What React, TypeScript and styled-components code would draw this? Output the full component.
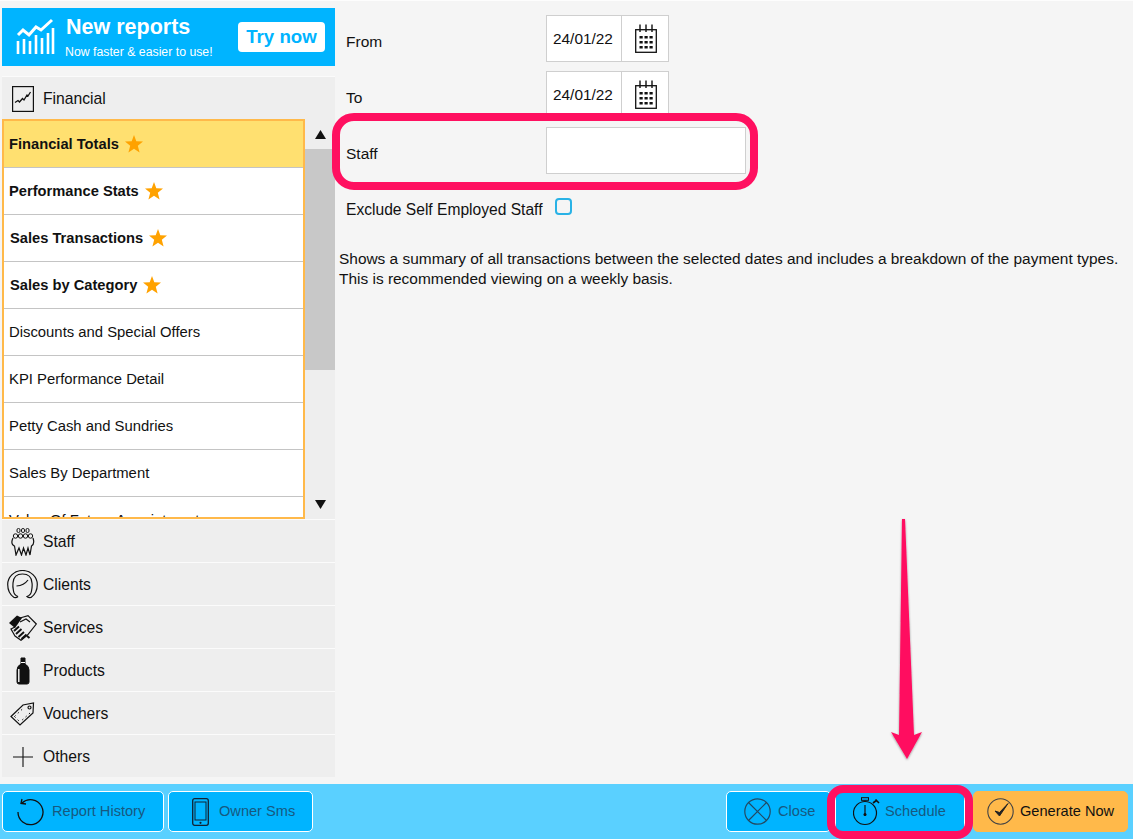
import React from "react";
import styled, { createGlobalStyle } from "styled-components";

const Global = createGlobalStyle`
  html, body { margin: 0; padding: 0; background: #f5f5f5; }
  body { font-family: "Liberation Sans", Arial, sans-serif; color: #111; overflow: hidden; }
  * { box-sizing: border-box; }
`;

const Page = styled.div`
  position: relative;
  width: 1133px;
  height: 839px;
  display: flex;
  flex-direction: column;
  background: #f5f5f5;
  border-top: 1px solid #fdfdfd;
  overflow: hidden;
`;
const Body = styled.div`
  flex: 1;
  display: flex;
  min-height: 0;
`;
const Sidebar = styled.aside`
  width: 333px;
  margin-left: 2px;
  padding-top: 7px;
  display: flex;
  flex-direction: column;
`;
const Banner = styled.div`
  height: 58px;
  background: #00b4ff;
  display: flex;
  align-items: center;
  padding: 0 10px 0 14px;
  color: #fff;
  margin-bottom: 10px;
`;
const BannerText = styled.div`
  margin-left: 10px;
  flex: 1;
  display: flex;
  flex-direction: column;
`;
const BannerTitle = styled.div`
  font-size: 21.5px;
  font-weight: 700;
  line-height: 25px;
`;
const BannerSub = styled.div`
  font-size: 12.3px;
  line-height: 16px;
  margin-top: 4px;
  margin-left: -1px;
`;
const TryNow = styled.div`
  width: 87px;
  height: 30px;
  background: #fff;
  border-radius: 4px;
  color: #00b4ff;
  font-size: 18.7px;
  font-weight: 700;
  line-height: 29px;
  text-align: center;
`;
const SectionRow = styled.div`
  height: 43px;
  flex: none;
  display: flex;
  align-items: center;
  background: #eeeeee;
  border-top: 1px solid #fbfbfb;
  font-size: 15.7px;
  padding-top: 1px;
`;
const IconSlot = styled.span`
  width: 40px;
  margin-right: 1px;
  padding-left: 1px;
  display: flex;
  align-items: center;
  justify-content: center;
  flex: none;
`;
const ListWrap = styled.div`
  height: 400px;
  flex: none;
  display: flex;
  background: #eeeeee;
`;
const List = styled.div`
  width: 303px;
  border: 2px solid #ffb94a;
  background: #fff;
  overflow: hidden;
`;
const Row = styled.div<{ $selected?: boolean; $bold?: boolean; $indent?: number }>`
  height: 47px;
  display: flex;
  align-items: center;
  padding-left: ${(p) => 5 + (p.$indent ?? 0)}px;
  padding-bottom: 1px;
  background: ${(p) => (p.$selected ? "#ffe070" : "#fff")};
  border-bottom: 1px solid #c4c4c4;
  font-size: ${(p) => (p.$bold ? "14.7px" : "14.85px")};
  font-weight: ${(p) => (p.$bold ? 700 : 400)};
  white-space: nowrap;
`;
const StarWrap = styled.span`
  margin-left: 6px;
  display: inline-flex;
  margin-top: 1px;
`;
const Scroll = styled.div`
  width: 30px;
  display: flex;
  flex-direction: column;
  align-items: center;
`;
const ScrollBtn = styled.div<{ $down?: boolean }>`
  height: 30px;
  width: 100%;
  flex: none;
  display: flex;
  align-items: ${(p) => (p.$down ? "flex-end" : "center")};
  justify-content: center;
  padding-bottom: ${(p) => (p.$down ? "10px" : "0")};
  margin-top: ${(p) => (p.$down ? "auto" : "0")};
`;
const Thumb = styled.div`
  width: 100%;
  height: 221px;
  background: #c8c8c8;
  flex: none;
`;
const Main = styled.main`
  flex: 1;
  padding-top: 14px;
  display: flex;
  flex-direction: column;
`;
const FormRow = styled.div`
  height: 47px;
  margin-bottom: 9px;
  margin-left: 11px;
  display: flex;
`;
const Label = styled.div`
  width: 200px;
  font-size: 15.5px;
  line-height: 17px;
  padding-top: 18px;
  flex: none;
`;
const DateBox = styled.div`
  width: 123px;
  height: 47px;
  display: flex;
  background: #fff;
  border: 1px solid #cfcfcf;
`;
const DateText = styled.div`
  width: 75px;
  border-right: 1px solid #cfcfcf;
  font-size: 15.4px;
  line-height: 46px;
  padding-left: 6px;
`;
const DateIcon = styled.div`
  flex: 1;
  display: flex;
  align-items: center;
  justify-content: center;
  padding-left: 1px;
`;
const StaffInput = styled.div`
  width: 200px;
  height: 47px;
  background: #fff;
  border: 1px solid #cfcfcf;
`;
const CheckRow = styled.div`
  margin-left: 11px;
  height: 20px;
  margin-top: 17px;
  display: flex;
  align-items: center;
  font-size: 15.6px;
`;
const Check = styled.span`
  width: 17px;
  height: 17px;
  margin-left: 13px;
  margin-top: -7px;
  border: 2px solid #29b2e6;
  border-radius: 4px;
  background: #f5f5f5;
`;
const Description = styled.p`
  margin: 29px 0 0 4px;
  font-size: 15.45px;
  line-height: 20px;
  white-space: nowrap;
`;
const Footer = styled.footer`
  height: 55px;
  flex: none;
  background: #5ad0ff;
  display: flex;
  align-items: center;
  padding: 0 5px 0 2px;
  gap: 4px;
`;
const FootButton = styled.div<{ $w: number; $primary?: boolean }>`
  width: ${(p) => p.$w}px;
  height: 41px;
  display: flex;
  align-items: center;
  border-radius: 5px;
  border: 1px solid ${(p) => (p.$primary ? "#ffb94a" : "#fff")};
  background: ${(p) => (p.$primary ? "#ffb94a" : "#00b4ff")};
  color: ${(p) => (p.$primary ? "#111" : "#17597f")};
  font-size: 14.6px;
  padding-bottom: 1px;
  white-space: nowrap;
`;
const FootIcon = styled.span<{ $left: number; $gap: number }>`
  margin-left: ${(p) => p.$left}px;
  margin-right: ${(p) => p.$gap}px;
  padding-top: 1px;
  display: flex;
  flex: none;
`;
const Spacer = styled.div`
  flex: 1;
`;
const GroupGap = styled.div`
  width: 0;
  flex: none;
`;
const Ring = styled.div<{ $x: number; $y: number; $w: number; $h: number; $r: number }>`
  position: absolute;
  left: ${(p) => p.$x}px;
  top: ${(p) => p.$y}px;
  width: ${(p) => p.$w}px;
  height: ${(p) => p.$h}px;
  border: 8px solid #ff1060;
  border-radius: ${(p) => p.$r}px;
  pointer-events: none;
`;
const ArrowLayer = styled.svg`
  position: absolute;
  left: 880px;
  top: 510px;
  overflow: visible;
`;

const I = { fill: "none", stroke: "#111", strokeWidth: 1.2 } as const;

const BannerChart = () => (
  <svg width="40" height="38" viewBox="0 0 40 38">
    <path d="M2 17 L7 12 L13 17 L20 9 L25 12 L36 2" fill="none" stroke="#fff" strokeWidth="3" />
    <path d="M2 36V23M8 36V21M14 36V23M20 36V17M26 36V20M32 36V15M37 36V10" fill="none" stroke="#fff" strokeWidth="2.6" />
  </svg>
);
const FinancialIcon = () => (
  <svg width="22" height="26" viewBox="0 0 22 26">
    <rect x=".6" y=".6" width="20.8" height="24.8" fill="none" stroke="#111" strokeWidth="1.2" />
    <path d="M3 16.5 L6 14.5 L7.5 16 L10.5 12.5 L12 14 L15 9 L16 10 L18.5 6" fill="none" stroke="#111" strokeWidth="1.3" />
  </svg>
);
const StaffIcon = () => (
  <svg width="24" height="28" viewBox="0 0 24 28">
    <g {...I} strokeWidth="1">
      <rect x="6" y=".5" width="3" height="4" rx="1.4" /><rect x="10.500" y=".5" width="3" height="4" rx="1.4" /><rect x="15" y=".5" width="3" height="4" rx="1.4" />
      <circle cx="4.500" cy="8" r="2.200" /><circle cx="9.500" cy="8" r="2.200" /><circle cx="14.500" cy="8" r="2.200" /><circle cx="19.500" cy="8" r="2.200" />
    </g>
    <path d="M2 10 Q0 14 1.500 16.500 Q3 18 3.500 18 L5 27 L8 20 L10.500 27 L12.500 20 L15 27 L17 20 L19 27 L20.500 18 Q24 16 22 10" {...I} />
  </svg>
);
const ClientsIcon = () => (
  <svg width="31" height="29" viewBox="0 0 31 29">
    <path d="M7 27.500 Q.7 23 .7 14.500 A14.800 14 0 0 1 30.300 14.500 Q30.300 23 24 27.500 Q21.500 28 20 26.500 Q24 25 24.500 21 Q25.500 16 25 13" {...I} />
    <path d="M11 26.500 Q7 25 6.500 21 Q5.500 16 6 13 Q6.500 4 15.500 4 Q24.500 4 25 13" {...I} />
    <path d="M7 27.500 Q9.500 28 11 26.500" {...I} />
    <path d="M9.500 16 Q17 15.500 21 10" {...I} />
  </svg>
);
const ServicesIcon = () => (
  <svg width="28" height="26" viewBox="0 0 28 26">
    <path d="M0 8 L8 .5 L13 3 L6 13 Z" fill="#111" />
    <path d="M11 3 L19 .7 L27.300 9 L18.500 20 L12 25.300 L6 21 L2 14 L6 12" {...I} />
    <path d="M11 7 L17 4 L21 7" {...I} />
    <path d="M5 16 L10 11.500 M7 19 L12.500 14 M9.500 22 L15 17 M12.500 24 L17.500 19.500" stroke="#111" strokeWidth="1.900" fill="none" />
    <path d="M18 21 L20.500 23" stroke="#111" strokeWidth="2" />
  </svg>
);
const ProductsIcon = () => (
  <svg width="14" height="28" viewBox="0 0 14 28">
    <path d="M5 1 H9 V7 Q13 9 13 13 V25 Q13 27 11 27 H3 Q1 27 1 25 V13 Q1 9 5 7 Z" fill="#111" stroke="#111" />
    <path d="M2.800 12 V25" stroke="#fff" strokeWidth="1.400" />
    <path d="M5 5.500 H9" stroke="#fff" strokeWidth="1" />
  </svg>
);
const VoucherIcon = () => (
  <svg width="25" height="24" viewBox="0 0 25 24">
    <path d="M1 14.500 L13 3 L23.500 1 L23 11 L10 23 Z" {...I} />
    <circle cx="19.500" cy="5.500" r="1.500" {...I} />
    <path d="M4.500 14.500 L14 5.500 M20 11 L10 20 M4.500 14.500 L10 20" fill="none" stroke="#111" strokeWidth="1" strokeDasharray="1.500 3" />
  </svg>
);
const PlusIcon = () => (
  <svg width="20" height="20" viewBox="0 0 20 20">
    <path d="M0 10 H20 M10 0 V20" fill="none" stroke="#111" strokeWidth="1.100" />
  </svg>
);
const Star = () => (
  <svg width="18" height="18" viewBox="0 0 18 18">
    <polygon points="9,0 11.300,6.200 18,6.600 12.800,10.800 14.600,17.500 9,13.700 3.400,17.500 5.200,10.800 0,6.600 6.700,6.200" fill="#ffa200" />
  </svg>
);
const Triangle = ({ down }: { down?: boolean }) => (
  <svg width="11" height="9" viewBox="0 0 11 9">
    <polygon points={down ? "0,0 11,0 5.500,9" : "5.500,0 11,9 0,9"} fill="#111" />
  </svg>
);
const CalendarIcon = () => (
  <svg width="22" height="29" viewBox="0 0 22 29">
    <rect x=".7" y="5.700" width="20.600" height="22.600" fill="#fff" stroke="#111" strokeWidth="1.300" />
    <path d="M5 .5 V8 M11 .5 V8 M17 .5 V8" stroke="#111" strokeWidth="1.400" />
    {[4.500, 9.500, 14.500].map((x) =>
      [12, 17, 22].map((y) => <rect key={`${x}-${y}`} x={x} y={y} width="3.200" height="2.500" fill="#111" />),
    )}
  </svg>
);
const HistoryIcon = () => (
  <svg width="28" height="28" viewBox="0 0 28 28">
    <path d="M6 5 A12.500 12.500 0 1 1 2 14" fill="none" stroke="#111" strokeWidth="1.300" />
    <path d="M6 1 L5 5.500 L10 6" fill="none" stroke="#111" strokeWidth="1.300" />
  </svg>
);
const PhoneIcon = () => (
  <svg width="17" height="28" viewBox="0 0 17 28">
    <rect x=".7" y=".7" width="15.600" height="26.600" rx="2" fill="none" stroke="#123" strokeWidth="1.300" />
    <rect x="3" y="4" width="11" height="18" fill="none" stroke="#123" strokeWidth="1" />
    <circle cx="8.500" cy="24.800" r="1.100" fill="#123" />
  </svg>
);
const CloseIcon = () => (
  <svg width="27" height="27" viewBox="0 0 27 27">
    <circle cx="13.500" cy="13.500" r="12.700" fill="none" stroke="#234a63" strokeWidth="1.200" />
    <path d="M4.500 4.500 L22.500 22.500 M22.500 4.500 L4.500 22.500" stroke="#234a63" strokeWidth="1.200" />
  </svg>
);
const StopwatchIcon = () => (
  <svg width="27" height="29" viewBox="0 0 27 29">
    <circle cx="12" cy="16" r="11.500" fill="none" stroke="#111" strokeWidth="1.200" />
    <rect x="8.500" y=".7" width="7" height="2.600" fill="none" stroke="#111" strokeWidth="1" />
    <path d="M12 3.500 V5" stroke="#111" />
    <path d="M20 6 L24 3 M22.500 2.500 L26 6" stroke="#111" strokeWidth="1.600" />
    <path d="M12 8 V19" stroke="#111" strokeWidth="1.200" />
    <circle cx="12" cy="17.500" r="1.500" fill="#111" />
  </svg>
);
const CheckIcon = () => (
  <svg width="27" height="27" viewBox="0 0 27 27">
    <circle cx="13.500" cy="13.500" r="12.700" fill="none" stroke="#444" strokeWidth="1.100" />
    <path d="M8 13 L12.500 18 L21 5.500 L12.500 14.500 Z" fill="#222" stroke="#222" strokeWidth="1" strokeLinejoin="round" />
  </svg>
);
const Arrow = () => (
  <ArrowLayer width="50" height="250" viewBox="0 0 50 250">
    <defs>
      <filter id="sh" x="-50%" y="-5%" width="200%" height="110%">
        <feDropShadow dx="0" dy="1" stdDeviation="1.200" floodColor="#000" floodOpacity=".4" />
      </filter>
    </defs>
    <polygon filter="url(#sh)" points="22,8 25,8 34,224 42,221 27,248 11,221 19,224" fill="#ff1060" />
  </ArrowLayer>
);

const reports: { name: string; star?: boolean; indent?: number }[] = [
  { name: "Financial Totals", star: true },
  { name: "Performance Stats", star: true },
  { name: "Sales Transactions", star: true, indent: 1 },
  { name: "Sales by Category", star: true, indent: 1 },
  { name: "Discounts and Special Offers" },
  { name: "KPI Performance Detail" },
  { name: "Petty Cash and Sundries" },
  { name: "Sales By Department" },
  { name: "Value Of Future Appointments" },
];
const sections = [
  { name: "Staff", icon: <StaffIcon /> },
  { name: "Clients", icon: <ClientsIcon /> },
  { name: "Services", icon: <ServicesIcon /> },
  { name: "Products", icon: <ProductsIcon /> },
  { name: "Vouchers", icon: <VoucherIcon /> },
  { name: "Others", icon: <PlusIcon /> },
];

export default function App() {
  return (
    <Page>
      <Global />
      <Body>
        <Sidebar>
          <Banner>
            <BannerChart />
            <BannerText>
              <BannerTitle>New reports</BannerTitle>
              <BannerSub>Now faster &amp; easier to use!</BannerSub>
            </BannerText>
            <TryNow>Try now</TryNow>
          </Banner>
          <SectionRow>
            <IconSlot><FinancialIcon /></IconSlot>Financial
          </SectionRow>
          <ListWrap>
            <List>
              {reports.map((r, i) => (
                <Row key={r.name} $selected={i === 0} $bold={r.star} $indent={r.indent}>
                  {r.name}
                  {r.star && <StarWrap><Star /></StarWrap>}
                </Row>
              ))}
            </List>
            <Scroll>
              <ScrollBtn><Triangle /></ScrollBtn>
              <Thumb />
              <ScrollBtn $down><Triangle down /></ScrollBtn>
            </Scroll>
          </ListWrap>
          {sections.map((s) => (
            <SectionRow key={s.name}>
              <IconSlot>{s.icon}</IconSlot>{s.name}
            </SectionRow>
          ))}
        </Sidebar>
        <Main>
          <FormRow>
            <Label>From</Label>
            <DateBox><DateText>24/01/22</DateText><DateIcon><CalendarIcon /></DateIcon></DateBox>
          </FormRow>
          <FormRow>
            <Label>To</Label>
            <DateBox><DateText>24/01/22</DateText><DateIcon><CalendarIcon /></DateIcon></DateBox>
          </FormRow>
          <FormRow>
            <Label>Staff</Label>
            <StaffInput />
          </FormRow>
          <CheckRow>Exclude Self Employed Staff<Check /></CheckRow>
          <Description>
            Shows a summary of all transactions between the selected dates and includes a breakdown of the payment types.
            <br />
            This is recommended viewing on a weekly basis.
          </Description>
        </Main>
      </Body>
      <Footer>
        <FootButton $w={162}><FootIcon $left={13} $gap={8}><HistoryIcon /></FootIcon>Report History</FootButton>
        <FootButton $w={145}><FootIcon $left={23} $gap={10}><PhoneIcon /></FootIcon>Owner Sms</FootButton>
        <Spacer />
        <FootButton $w={105}><FootIcon $left={17} $gap={7}><CloseIcon /></FootIcon>Close</FootButton>
        <FootButton $w={130}><FootIcon $left={17} $gap={5}><StopwatchIcon /></FootIcon>Schedule</FootButton>
        <GroupGap />
        <FootButton $w={155} $primary><FootIcon $left={13} $gap={6}><CheckIcon /></FootIcon>Generate Now</FootButton>
      </Footer>
      <Ring $x={332} $y={112} $w={426} $h={77} $r={22} />
      <Ring $x={827} $y={784} $w={146} $h={54} $r={16} />
      <Arrow />
    </Page>
  );
}
